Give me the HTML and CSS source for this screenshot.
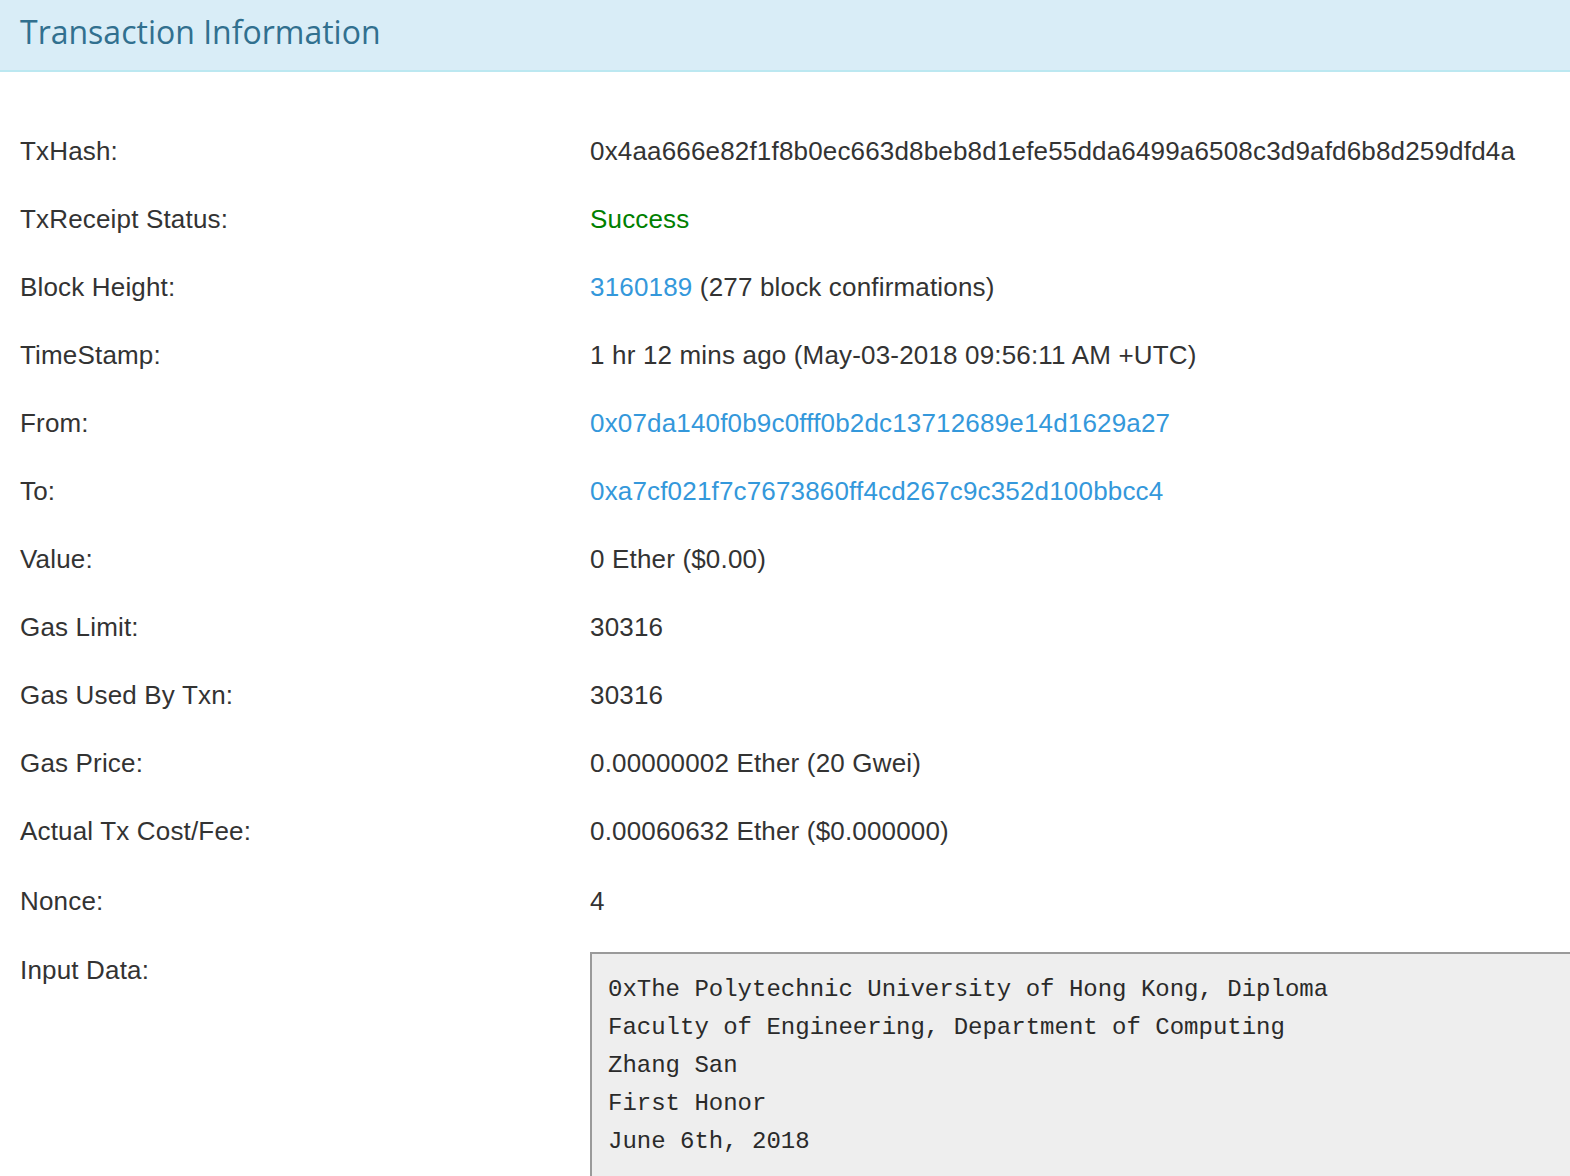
FILE: index.html
```html
<!DOCTYPE html>
<html>
<head>
<meta charset="utf-8">
<link rel="stylesheet" href="styles.css">
</head>
<body>
<div class="panel">
  <div class="panel-heading">
    <h3 class="panel-title">Transaction Information</h3>
  </div>
  <div class="panel-body">
    <div class="row"><div class="label">TxHash:</div><div class="value">0x4aa666e82f1f8b0ec663d8beb8d1efe55dda6499a6508c3d9afd6b8d259dfd4a</div></div>
    <div class="row"><div class="label">TxReceipt Status:</div><div class="value"><span class="success">Success</span></div></div>
    <div class="row"><div class="label">Block Height:</div><div class="value"><a class="link">3160189</a> (277 block confirmations)</div></div>
    <div class="row"><div class="label">TimeStamp:</div><div class="value">1 hr 12 mins ago (May-03-2018 09:56:11 AM +UTC)</div></div>
    <div class="row"><div class="label">From:</div><div class="value"><a class="link">0x07da140f0b9c0fff0b2dc13712689e14d1629a27</a></div></div>
    <div class="row"><div class="label">To:</div><div class="value"><a class="link">0xa7cf021f7c7673860ff4cd267c9c352d100bbcc4</a></div></div>
    <div class="row"><div class="label">Value:</div><div class="value">0 Ether ($0.00)</div></div>
    <div class="row"><div class="label">Gas Limit:</div><div class="value">30316</div></div>
    <div class="row"><div class="label">Gas Used By Txn:</div><div class="value">30316</div></div>
    <div class="row"><div class="label">Gas Price:</div><div class="value">0.00000002 Ether (20 Gwei)</div></div>
    <div class="row row-tall"><div class="label">Actual Tx Cost/Fee:</div><div class="value">0.00060632 Ether ($0.000000)</div></div>
    <div class="row row-mid"><div class="label">Nonce:</div><div class="value">4</div></div>
    <div class="row"><div class="label">Input Data:</div><div class="value"><pre class="input-data">0xThe Polytechnic University of Hong Kong, Diploma
Faculty of Engineering, Department of Computing
Zhang San
First Honor
June 6th, 2018</pre></div></div>
  </div>
</div>
</body>
</html>
```
FILE: styles.css
```css
html, body {
  margin: 0;
  padding: 0;
  background: #fff;
  overflow: hidden;
}
body {
  width: 1570px;
  height: 1176px;
  font-family: "Liberation Sans", Arial, sans-serif;
  font-size: 26px;
  color: #333;
}
.panel-heading {
  height: 70px;
  background: #d9edf7;
  border-bottom: 2px solid #bce8f1;
  display: flex;
  align-items: center;
  padding-left: 20px;
}
.panel-title {
  margin: 0;
  font-family: "Open Sans", sans-serif;
  font-weight: 400;
  font-size: 32px;
  color: #31708f;
  line-height: 1;
  position: relative;
  top: -3px;
}
.panel-body {
  padding-top: 45px;
  padding-left: 20px;
  letter-spacing: 0.17px;
}
.row {
  display: grid;
  grid-template-columns: 570px 1fr;
  height: 68px;
  line-height: 68px;
}
.row-tall { height: 70px; }
.row-mid { height: 69px; }
.label, .value {
  white-space: nowrap;
}
.success { color: #008000; }
.link { color: #3498db; text-decoration: none; }
.input-data {
  margin: 16px 0 0 0;
  width: 1000px;
  height: 240px;
  box-sizing: border-box;
  background: #eeeeee;
  border: 2px solid #9a9a9a;
  border-right: none;
  padding: 17px 16px;
  font-family: "Liberation Mono", "Courier New", monospace;
  font-size: 24px;
  line-height: 38px;
  letter-spacing: 0;
  color: #2a2a2a;
  white-space: pre;
}
```
